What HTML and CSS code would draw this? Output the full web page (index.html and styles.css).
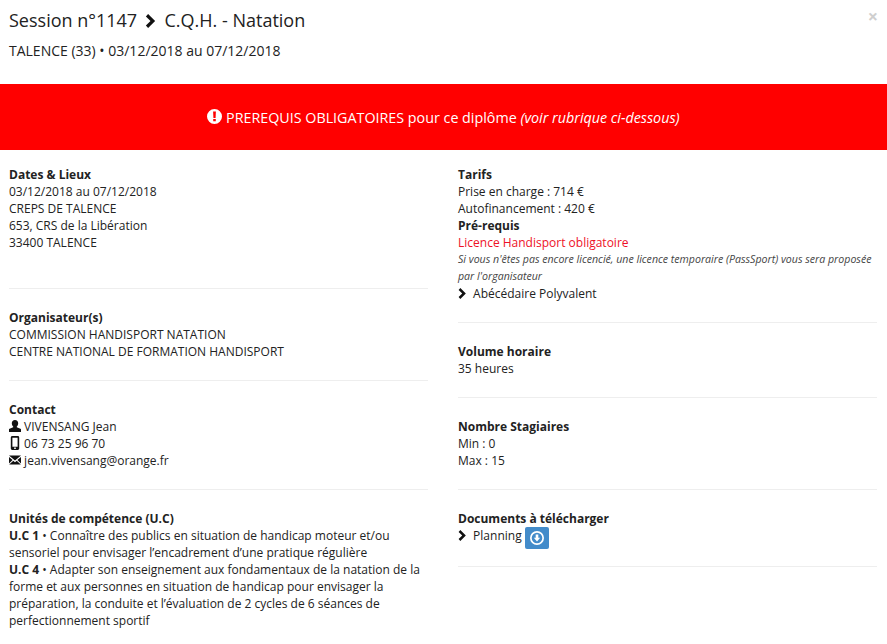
FILE: index.html
```html
<!DOCTYPE html>
<html lang="fr">
<head>
<meta charset="utf-8">
<title>Session n°1147</title>
<link rel="stylesheet" href="styles.css">
</head>
<body>
<header class="head">
  <h1 class="title">Session n°1147
    <svg class="chev-lg" viewBox="0 0 12 14"><path d="M2.6 0 L9.6 7 L2.6 14 L0.4 11.6 L5 7 L0.4 2.4 Z"/></svg>
    C.Q.H. - Natation</h1>
  <p class="sub">TALENCE (33) • 03/12/2018 au 07/12/2018</p>
  <span class="close">×</span>
</header>
<div class="banner">
  <svg class="warn" viewBox="0 0 14 14"><path fill-rule="evenodd" d="M7 0a7 7 0 1 1 0 14A7 7 0 0 1 7 0ZM5.7 2.4 L6 8.4 H8 L8.3 2.4 Z M5.8 9.4 V11.5 H8.2 V9.4 Z"/></svg>
  PREREQUIS OBLIGATOIRES pour ce diplôme <em>(voir rubrique ci-dessous)</em>
</div>
<main class="cols">
  <div class="col">
    <section>
      <h2>Dates &amp; Lieux</h2>
      <div>03/12/2018 au 07/12/2018</div>
      <div>CREPS DE TALENCE</div>
      <div>653, CRS de la Libération</div>
      <div>33400 TALENCE</div>
      <div class="blank"></div>
    </section>
    <hr>
    <section>
      <h2>Organisateur(s)</h2>
      <div>COMMISSION HANDISPORT NATATION</div>
      <div>CENTRE NATIONAL DE FORMATION HANDISPORT</div>
    </section>
    <hr>
    <section>
      <h2>Contact</h2>
      <div><svg class="ico" viewBox="0 0 12 12"><path d="M6 0C8 0 9.2 1.3 9.2 3.2 9.2 4.6 8.5 5.8 7.8 6.4V7.2L12 9V12H0V9L4.2 7.2V6.4C3.5 5.8 2.8 4.6 2.8 3.2 2.8 1.3 4 0 6 0Z"/></svg> VIVENSANG Jean</div>
      <div><svg class="ico tall" viewBox="0 0 12 14"><path fill-rule="evenodd" d="M3.6 0H8.8Q10.2 0 10.2 1.4V12.6Q10.2 14 8.8 14H3.2Q1.8 14 1.8 12.6V1.4Q1.8 0 3.6 0ZM3.4 1.8V10.8H8.6V1.8ZM5.2 11.6V12.9H6.8V11.6Z"/></svg> 06 73 25 96 70</div>
      <div><svg class="ico" viewBox="0 0 12 12"><path d="M0 1.6H12L6 6.6ZM0 3V9.6L3.6 6.1ZM12 3V9.6L8.4 6.1ZM4.3 6.8 6 8.2 7.7 6.8 11.8 10.4H0.2Z"/></svg> jean.vivensang@orange.fr</div>
    </section>
    <hr>
    <section>
      <h2>Unités de compétence (U.C)</h2>
      <div><b>U.C 1</b> • Connaître des publics en situation de handicap moteur et/ou sensoriel pour envisager l’encadrement d’une pratique régulière</div>
      <div><b>U.C 4</b> • Adapter son enseignement aux fondamentaux de la natation de la forme et aux personnes en situation de handicap pour envisager la préparation, la conduite et l’évaluation de 2 cycles de 6 séances de perfectionnement sportif</div>
    </section>
  </div>
  <div class="col">
    <section>
      <h2>Tarifs</h2>
      <div>Prise en charge : 714 €</div>
      <div>Autofinancement : 420 €</div>
      <h2>Pré-requis</h2>
      <div class="red">Licence Handisport obligatoire</div>
      <div class="note">Si vous n'êtes pas encore licencié, une licence temporaire (PassSport) vous sera proposée par l'organisateur</div>
      <div><svg class="chev" viewBox="0 0 12 14"><path d="M2.6 0 L9.6 7 L2.6 14 L0.4 11.6 L5 7 L0.4 2.4 Z"/></svg> Abécédaire Polyvalent</div>
    </section>
    <hr>
    <section>
      <h2>Volume horaire</h2>
      <div>35 heures</div>
    </section>
    <hr>
    <section>
      <h2>Nombre Stagiaires</h2>
      <div>Min : 0</div>
      <div>Max : 15</div>
    </section>
    <hr>
    <section>
      <h2>Documents à télécharger</h2>
      <div class="doc"><svg class="chev" viewBox="0 0 12 14"><path d="M2.6 0 L9.6 7 L2.6 14 L0.4 11.6 L5 7 L0.4 2.4 Z"/></svg> Planning
        <span class="btn"><svg viewBox="0 0 14 14"><path fill-rule="evenodd" d="M7 0a7 7 0 1 1 0 14A7 7 0 0 1 7 0ZM7 1.7a5.3 5.3 0 1 0 0 10.6A5.3 5.3 0 0 0 7 1.7ZM5.7 3.4H8.3V6.8H10.2L7 10.6 3.8 6.8H5.7Z"/></svg></span>
      </div>
    </section>
    <hr>
  </div>
</main>
</body>
</html>
```
FILE: styles.css
```css
* { box-sizing: border-box; }
html, body { margin: 0; padding: 0; }
body {
  width: 887px;
  height: 644px;
  overflow: hidden;
  background: #fff;
  color: #222;
  font-family: "Open Sans", sans-serif;
  font-size: 12px;
  line-height: 17px;
}
.head { position: relative; height: 84px; padding: 8px 9px 0; }
.title { margin: 0; font-size: 18px; font-weight: 400; line-height: 25px; color: #222; }
.chev-lg { width: 13px; height: 14px; margin: 0 2px 0 3px; fill: #111; vertical-align: -0.5px; }
.sub { margin: 9px 0 0; font-size: 14px; line-height: 18px; }
.close {
  position: absolute;
  top: 6px;
  right: 9px;
  font-size: 18px;
  font-weight: 700;
  line-height: 20px;
  color: #cfcfcf;
}
.banner {
  height: 66px;
  background: #f00;
  color: #fff;
  font-size: 14.3px;
  line-height: 68px;
  text-align: center;
}
.warn { width: 15px; height: 15px; fill: #fff; vertical-align: -1px; }
.cols {
  display: grid;
  grid-template-columns: 419px 419px;
  column-gap: 30px;
  padding: 16px 10px 0 9px;
}
h2 { margin: 0; font-size: 12px; line-height: 17px; font-weight: 700; color: #222; }
hr { margin: 20px 0; border: 0; border-top: 1px solid #eee; }
b { font-weight: 700; }
.blank { height: 17px; }
.red { color: #ee1128; }
.note { font-size: 10.6px; font-style: italic; line-height: 17px; color: #444; }
.ico { width: 12px; height: 12px; fill: #111; vertical-align: -1px; }
.ico.tall { height: 14px; vertical-align: -2px; }
.chev { width: 10px; height: 11px; fill: #111; vertical-align: -1px; margin-right: 2px; }
.doc { height: 19px; }
.btn {
  display: inline-block;
  width: 24px;
  height: 22px;
  padding: 4px 5px;
  border-radius: 2px;
  background: #428bca;
  vertical-align: -5px;
  line-height: 0;
}
.btn svg { width: 14px; height: 14px; fill: #fff; }
```
